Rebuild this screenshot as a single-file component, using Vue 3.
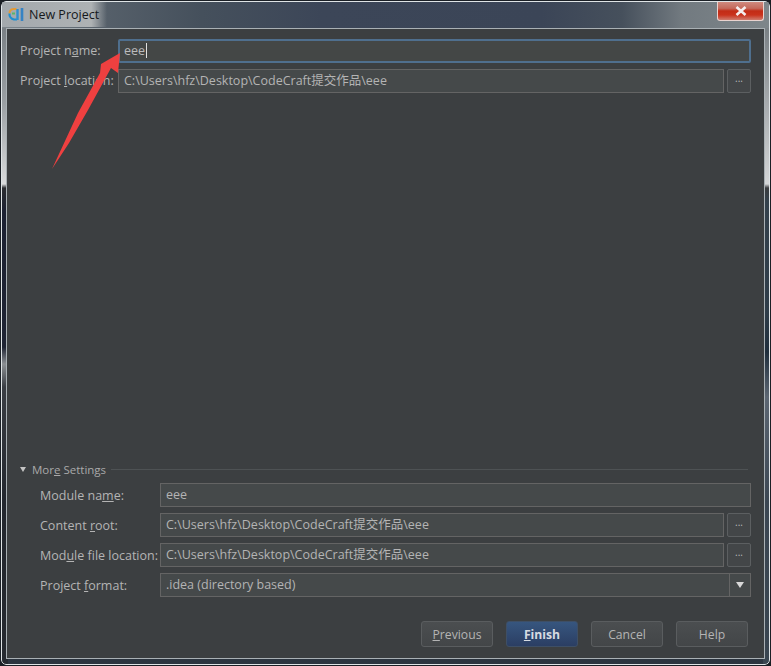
<script setup>
const moreRows = [
  { before: 'Content ', key: 'r', after: 'oot:', value: 'C:\\Users\\hfz\\Desktop\\CodeCraft提交作品\\eee' },
  { before: 'Mod', key: 'u', after: 'le file location:', value: 'C:\\Users\\hfz\\Desktop\\CodeCraft提交作品\\eee' },
]
</script>

<template>
  <div class="window">
    <div class="frame">
      <header class="titlebar">
        <div class="title-glow">
          <svg class="app-icon" width="17" height="17" viewBox="0 0 17 17" fill="none">
            <path d="M8.5 3 H5.5 A4.5 4.5 0 0 0 1.5 7.5" stroke="#e39a35" stroke-width="2" />
            <path d="M1.5 7.5 A5.5 5.5 0 0 0 6 13.5 H9" stroke="#1f8fd0" stroke-width="2.2" />
            <path d="M4 7.5 H7" stroke="#58b868" stroke-width="2" />
            <path d="M9.5 3 V14" stroke="#2f8fd0" stroke-width="2.4" />
            <path d="M14 2 V15" stroke="#3583c4" stroke-width="2.6" />
          </svg>
          <span class="title-text">New Project</span>
        </div>
        <button class="close" type="button" aria-label="Close">
          <svg width="14" height="10" viewBox="0 0 14 10">
            <path d="M2.5 1 L11.5 9 M11.5 1 L2.5 9" stroke="#f4eeee" stroke-width="2.6" />
          </svg>
        </button>
      </header>

      <main class="panel">
        <div class="row top-row">
          <label class="label top-label">Project n<u>a</u>me:</label>
          <div class="field focused">eee<span class="caret"></span></div>
        </div>
        <div class="row top-row">
          <label class="label top-label">Project <u>l</u>ocation:</label>
          <div class="field">C:\Users\hfz\Desktop\CodeCraft提交作品\eee</div>
          <button class="browse" type="button">...</button>
        </div>

        <div class="more">
          <div class="more-head">
            <span class="tri"></span>
            <span class="more-title">Mor<u>e</u> Settings</span>
            <span class="more-line"></span>
          </div>
          <div class="more-rows">
            <div class="row">
              <label class="label more-label">Module na<u>m</u>e:</label>
              <div class="field">eee</div>
            </div>
            <div class="row" v-for="r in moreRows" :key="r.key">
              <label class="label more-label">{{ r.before }}<u>{{ r.key }}</u>{{ r.after }}</label>
              <div class="field">{{ r.value }}</div>
              <button class="browse" type="button">...</button>
            </div>
            <div class="row">
              <label class="label more-label">Project <u>f</u>ormat:</label>
              <div class="field combo">
                <span class="combo-value">.idea (directory based)</span>
                <span class="combo-btn"><span class="combo-tri"></span></span>
              </div>
            </div>
          </div>
        </div>

        <footer class="actions">
          <button class="btn" type="button"><u>P</u>revious</button>
          <button class="btn primary" type="button"><u>F</u>inish</button>
          <button class="btn" type="button">Cancel</button>
          <button class="btn" type="button">Help</button>
        </footer>
      </main>
    </div>

    <svg class="arrow" width="771" height="666" viewBox="0 0 771 666">
      <polygon points="52,169 78,113 100,73 101,64 120,53 118,73 111,68 88,110 69,143" fill="#ef4040" />
    </svg>
  </div>
</template>

<style>
html, body { margin: 0; background: #1a1f24; }
</style>

<style scoped>
.window {
  position: relative;
  width: 771px;
  height: 666px;
  box-sizing: border-box;
  border: 1px solid #1b2026;
  border-radius: 6px;
  overflow: hidden;
  font-family: "Open Sans", "Noto Sans CJK SC", sans-serif;
  font-size: 12.5px;
  color: #b4b4b4;
}
.frame {
  height: 100%;
  box-sizing: border-box;
  display: flex;
  flex-direction: column;
  padding: 0 4px 5px;
  border: 1px solid #dfe4e6;
  border-radius: 5px;
  background:
    linear-gradient(to bottom, #6f767b 0, #9a9fa3 100px, #d9dbdc 182px, #2a2c30 186px, #1c2132 210px, #1f2433 345px, #8b8f93 362px, #3a3e44 385px, #23272e 500px, #262a30 100%) left / 6px 100% no-repeat,
    linear-gradient(to bottom, #6a7176 0, #a6aaad 100px, #d4d6d7 182px, #3a3c3e 186px, #34414c 200px, #2e3c48 310px, #1f2e3c 350px, #5c6672 395px, #3b4652 500px, #394550 100%) right / 6px 100% no-repeat,
    #2c3540;
}
.titlebar {
  flex: none;
  height: 26px;
  margin: 0 -4px;
  display: flex;
  justify-content: space-between;
  align-items: flex-start;
  background: linear-gradient(to right, #7e878d 0, #56606a 100px, #45505c 200px, #3c4658 320px, #3b4557 540px, #46505c 620px, #727a80 680px, #7e868a 100%);
}
.title-glow {
  height: 25px;
  display: flex;
  align-items: center;
  padding: 0 8px 0 6px;
  background: linear-gradient(to right, #a3a9ad 0, #aeb2b4 85%, rgba(160,165,168,0) 100%);
}
.app-icon { flex: none; margin-right: 4px; }
.title-text {
  font-size: 12.5px;
  color: #15181b;
}
.close {
  width: 47px;
  height: 19px;
  margin-right: 5px;
  padding: 0;
  display: flex;
  align-items: center;
  justify-content: center;
  border: 1px solid #e9d3cf;
  border-top: 0;
  border-radius: 0 0 3px 3px;
  background: linear-gradient(to bottom, #cf8a7e 0, #c46a5c 35%, #c22c16 50%, #c9321c 72%, #cf7c6e 100%);
}
.panel {
  flex: 1;
  min-height: 0;
  display: flex;
  flex-direction: column;
  padding: 10px 13px 11px;
  border: 1px solid #a9b0b4;
  background: #3c3f41;
}
.row {
  display: flex;
  align-items: stretch;
  height: 24px;
}
.top-row + .top-row { margin-top: 6px; }
.label {
  flex: none;
  line-height: 24px;
  white-space: nowrap;
}
.top-label { width: 98px; }
.more-label {
  width: 120px;
  padding-top: 1px;
}
.field {
  flex: 1;
  min-width: 0;
  box-sizing: border-box;
  padding: 0 5px;
  line-height: 22px;
  border: 1px solid #646464;
  background: #45494a;
  color: #b4b4b4;
  white-space: nowrap;
}
.focused {
  padding: 0 4px;
  line-height: 20px;
  border: 2px solid #4f6f8e;
  border-radius: 2px;
  background: #444746;
  color: #bbbbbb;
}
.caret {
  display: inline-block;
  width: 1px;
  height: 15px;
  margin-left: 1px;
  vertical-align: -3px;
  background: #e0e0e0;
}
.browse {
  flex: none;
  width: 24px;
  margin-left: 3px;
  padding: 0 0 6px;
  box-sizing: border-box;
  border: 1px solid #5c5f61;
  border-radius: 2px;
  background: #434648;
  color: #b8b8b8;
  font-family: inherit;
  font-size: 10px;
  line-height: 1;
}
.more { margin-top: auto; }
.more-head {
  height: 16px;
  display: flex;
  align-items: center;
}
.tri {
  flex: none;
  width: 0;
  height: 0;
  margin-right: 5px;
  border-left: 3.5px solid transparent;
  border-right: 3.5px solid transparent;
  border-top: 5px solid #c4c4c4;
}
.more-title {
  flex: none;
  margin: 0 5px 0 1px;
  font-size: 11.5px;
  color: #a9a9a9;
}
.more-line {
  flex: 1;
  height: 1px;
  margin-right: 3px;
  background: #4e5254;
}
.more-rows {
  display: flex;
  flex-direction: column;
  gap: 6px;
  margin-top: 6px;
  padding-left: 20px;
}
.combo {
  display: flex;
  padding: 0 0 0 5px;
}
.combo-value { flex: 1; }
.combo-btn {
  flex: none;
  width: 20px;
  display: flex;
  align-items: center;
  justify-content: center;
  border-left: 1px solid #646464;
}
.combo-tri {
  width: 0;
  height: 0;
  border-left: 4px solid transparent;
  border-right: 4px solid transparent;
  border-top: 6px solid #d8d8d8;
}
.actions {
  display: flex;
  justify-content: flex-end;
  gap: 13px;
  margin-top: 24px;
  padding-right: 3px;
}
.btn {
  width: 72px;
  height: 26px;
  padding: 0;
  box-sizing: border-box;
  border: 1px solid #5a5d5f;
  border-radius: 3px;
  background: linear-gradient(to bottom, #4b4e50, #434648);
  color: #b4b4b4;
  font-family: inherit;
  font-size: 12.2px;
}
.primary {
  border-color: #3e4f66;
  background: linear-gradient(to bottom, #37567f, #2b3e63);
  color: #d6dbe2;
  font-weight: 700;
}
.arrow {
  position: absolute;
  left: -1px;
  top: -1px;
  pointer-events: none;
}
</style>
